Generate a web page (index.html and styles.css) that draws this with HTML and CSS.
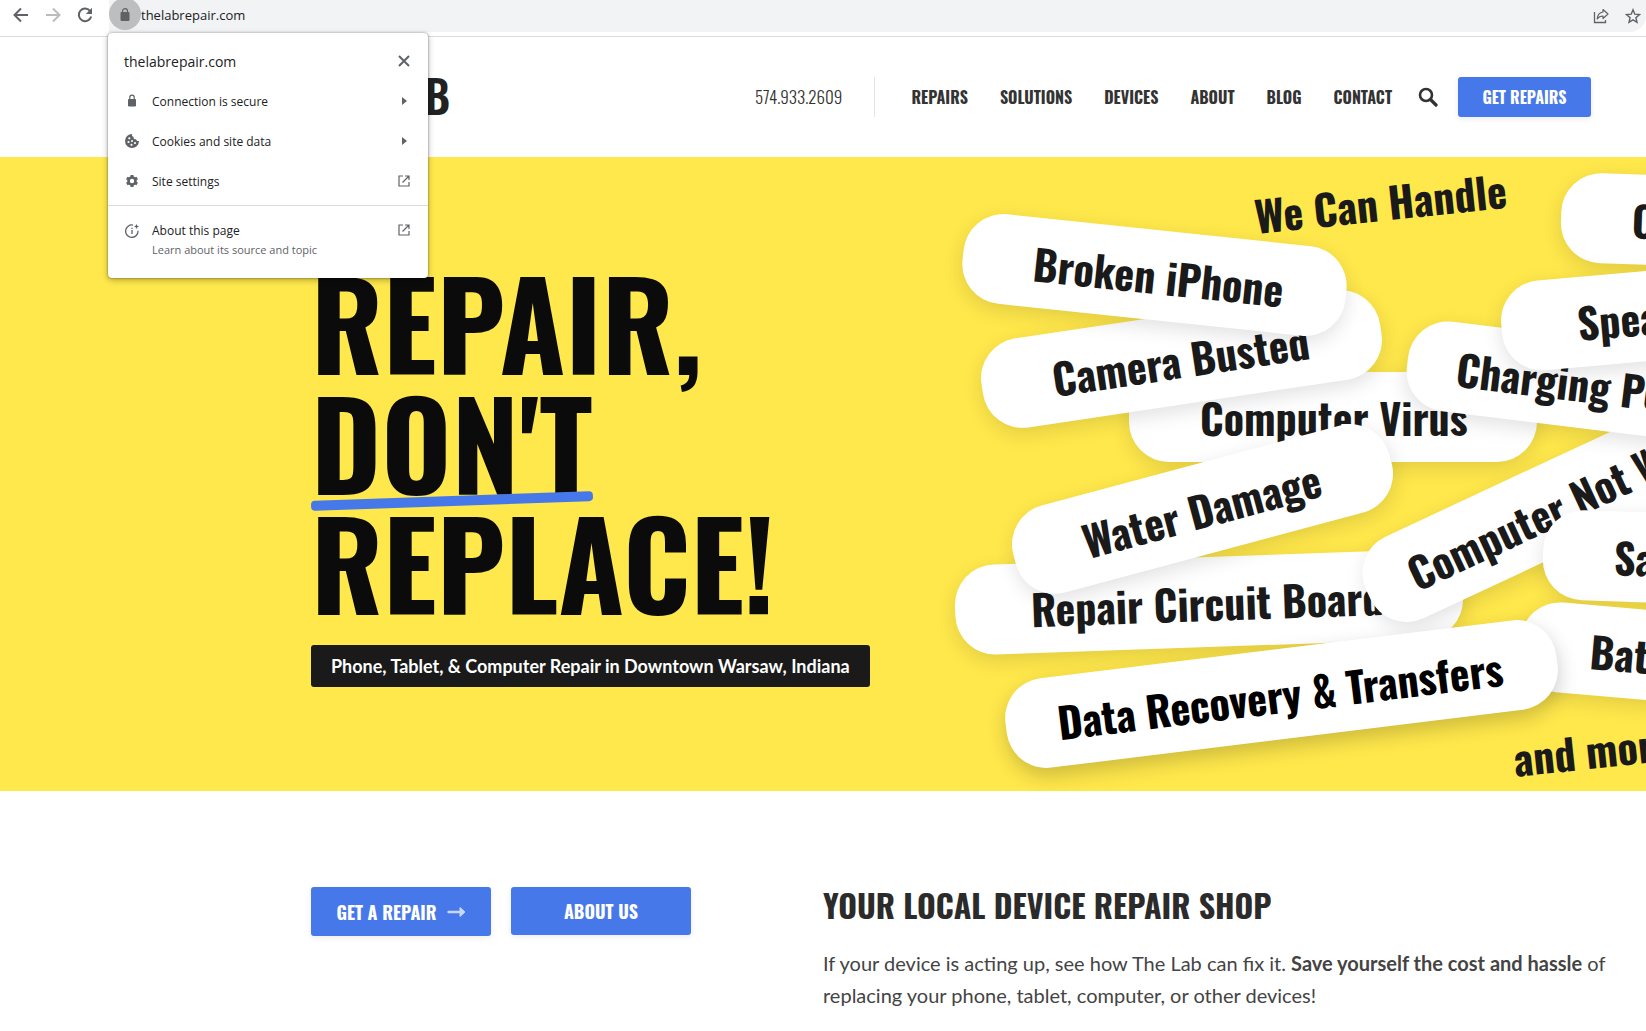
FILE: index.html
```html
<!DOCTYPE html>
<html lang="en">
<head>
    <meta charset="UTF-8">
    <meta name="viewport" content="width=device-width, initial-scale=1.0">
    <title>The Lab</title>
    <link rel="stylesheet" href="styles.css">
</head>
<body>
    <!-- browser bar -->
    <div class="browser-bar">
        <div class="browser-nav">
            <button class="icon-btn" aria-label="Back"><svg width="16" height="16" viewBox="0 0 16 16"><path d="M15 8H2M8 1.5L1.5 8L8 14.500" fill="none" stroke="#5f6368" stroke-width="2"/></svg></button>
            <button class="icon-btn" aria-label="Forward"><svg width="16" height="16" viewBox="0 0 16 16"><path d="M1 8h13M8 1.500L14.500 8L8 14.500" fill="none" stroke="#babcbe" stroke-width="2"/></svg></button>
            <button class="icon-btn" aria-label="Reload"><svg width="16" height="16" viewBox="0 0 16 16"><path d="M13.300 4.200A6.300 6.300 0 1 0 14.200 9.500" fill="none" stroke="#5f6368" stroke-width="2"/><path d="M15 .8v6.200H8.800z" fill="#5f6368"/></svg></button>
        </div>
        <div class="address">
            <button class="lock" aria-label="Site information"><svg width="10" height="13" viewBox="0 0 10 13"><path d="M1 4.500h8v8H1z" fill="#5f6368" stroke="#5f6368" stroke-linejoin="round"/><path d="M2.500 5V3.200a2.500 2.500 0 0 1 5 0V5" fill="none" stroke="#5f6368" stroke-width="1.200"/></svg></button>
            <span class="url">thelabrepair.com</span>
            <button class="icon-btn share" aria-label="Share"><svg width="16" height="16" viewBox="0 0 16 16"><path d="M1.500 4v10.500h11V12" fill="none" stroke="#5f6368" stroke-width="1.300"/><path d="M10 1.500L15 6l-5 4.500V8C7.500 8 5.500 9 4.200 11C4.500 7 6.500 4.500 10 4z" fill="none" stroke="#5f6368" stroke-width="1.200" stroke-linejoin="round"/></svg></button>
            <button class="icon-btn" aria-label="Bookmark"><svg width="16" height="16" viewBox="0 0 16 16"><path d="M8 1.800l1.800 4.400 4.700.4-3.600 3.100 1.100 4.600L8 11.800l-4 2.500 1.100-4.600L1.500 6.600l4.700-.4z" fill="none" stroke="#5f6368" stroke-width="1.400"/></svg></button>

            <!-- site info popup -->
            <div class="popup">
                <div class="popup-title">
                    <span>thelabrepair.com</span>
                    <button class="icon-btn" aria-label="Close"><svg width="12" height="12" viewBox="0 0 12 12"><path d="M1 1l10 10M11 1L1 11" stroke="#5f6368" stroke-width="2"/></svg></button>
                </div>
                <button class="row">
                    <svg width="14" height="14" viewBox="0 0 14 14"><path d="M3.500 5.500h7v6.500h-7z" fill="#5f6368" stroke="#5f6368" stroke-linejoin="round"/><path d="M4.800 5.500V3.400a2.200 2.200 0 0 1 4.400 0v2.100" fill="none" stroke="#5f6368" stroke-width="1.200"/></svg>
                    <span>Connection is secure</span>
                    <svg width="12" height="12" viewBox="0 0 12 12"><path d="M4 2l5 4-5 4z" fill="#5f6368"/></svg>
                </button>
                <button class="row">
                    <svg width="14" height="14" viewBox="0 0 14 14"><path d="M7 0a7 7 0 1 0 7 7c-1.500.3-2.700-.3-3-1.700C9.300 5.500 8.300 4.500 8.600 3 7.300 2.700 6.700 1.500 7 0z" fill="#5f6368"/><g fill="#fff"><circle cx="4.300" cy="4.300" r="1.100"/><circle cx="3.500" cy="8" r="1.100"/><circle cx="7" cy="7" r="1"/><circle cx="6.500" cy="10.800" r="1.100"/><circle cx="10" cy="9" r="1.100"/></g></svg>
                    <span>Cookies and site data</span>
                    <svg width="12" height="12" viewBox="0 0 12 12"><path d="M4 2l5 4-5 4z" fill="#5f6368"/></svg>
                </button>
                <button class="row">
                    <svg width="14" height="14" viewBox="0 0 14 14"><circle cx="7" cy="7" r="3.500" fill="none" stroke="#5f6368" stroke-width="2.600"/><path d="M7 1v2.500M7 10.500V13M1.800 4l2.200 1.300M10 8.700l2.200 1.300M1.800 10L4 8.700M10 5.300L12.200 4" stroke="#5f6368" stroke-width="3"/></svg>
                    <span>Site settings</span>
                    <svg width="12" height="12" viewBox="0 0 12 12"><path d="M5 1H1v10h10V7M7 1h4v4M11 1L4.500 7.500" fill="none" stroke="#5f6368" stroke-width="1.200"/></svg>
                </button>
                <hr>
                <button class="row about">
                    <svg width="14" height="14" viewBox="0 0 14 14"><path d="M8 1.100A6.200 6.200 0 1 0 13 6.800" fill="none" stroke="#5f6368" stroke-width="1.300"/><path d="M7 6v4M7 3.800v1.300" stroke="#5f6368" stroke-width="1.300"/><path d="M11.500 0l.8 1.700L14 2.500l-1.700.8-.8 1.700-.8-1.700L9 2.500l1.700-.8z" fill="#5f6368"/></svg>
                    <span>About this page<small>Learn about its source and topic</small></span>
                    <svg width="12" height="12" viewBox="0 0 12 12"><path d="M5 1H1v10h10V7M7 1h4v4M11 1L4.500 7.500" fill="none" stroke="#5f6368" stroke-width="1.200"/></svg>
                </button>
            </div>
        </div>
    </div>

    <header>
        <a href="#" class="logo">THE LAB</a>
        <a href="tel:5749332609" class="phone">574.933.2609</a>
        <nav>
            <a href="#">REPAIRS</a>
            <a href="#">SOLUTIONS</a>
            <a href="#">DEVICES</a>
            <a href="#">ABOUT</a>
            <a href="#">BLOG</a>
            <a href="#">CONTACT</a>
        </nav>
        <button class="icon-btn search" aria-label="Search"><svg width="20" height="20" viewBox="0 0 20 20"><circle cx="8" cy="8" r="6" fill="none" stroke="#333" stroke-width="2.600"/><path d="M12.500 12.500L18 18" stroke="#333" stroke-width="3.200" stroke-linecap="round"/></svg></button>
        <a href="#" class="btn btn-small">GET REPAIRS</a>
    </header>

    <section class="hero">
        <div class="hero-text">
            <h1>REPAIR,<br><span class="underlined">DON'T</span><br>REPLACE!</h1>
            <p class="tagline">Phone, Tablet, &amp; Computer Repair in Downtown Warsaw, Indiana</p>
        </div>
        <div class="pills">
            <span class="loose handle">We Can Handle</span>
            <span class="pill cracked">Cracked</span>
            <span class="pill circuit">Repair Circuit Board</span>
            <span class="pill virus">Computer Virus</span>
            <span class="pill camera">Camera Busted</span>
            <span class="pill broken">Broken iPhone</span>
            <span class="pill water">Water Damage</span>
            <span class="pill not-working">Computer Not Working</span>
            <span class="pill charging">Charging Port</span>
            <span class="pill speaker">Speaker</span>
            <span class="pill samsung">Samsung</span>
            <span class="pill battery">Battery Dead</span>
            <a href="#" class="pill data">Data Recovery &amp; Transfers</a>
            <span class="loose more">and more...</span>
        </div>
    </section>

    <section class="intro">
        <div class="buttons">
            <a href="#" class="btn arrow">GET A REPAIR <svg width="19" height="12" viewBox="0 0 19 12"><path d="M1.500 6H16" stroke="#c9d8fa" stroke-width="2.400" stroke-linecap="round"/><path d="M13 1.500L18 6l-5 4.500z" fill="#c9d8fa" stroke="#c9d8fa" stroke-linejoin="round"/></svg></a>
            <a href="#" class="btn">ABOUT US</a>
        </div>
        <div class="intro-text">
            <h2>YOUR LOCAL DEVICE REPAIR SHOP</h2>
            <p>If your device is acting up, see how The Lab can fix it. <strong>Save yourself the cost and hassle</strong> of replacing your phone, tablet, computer, or other devices!</p>
        </div>
    </section>
</body>
</html>
```
FILE: styles.css
```css
* {
    box-sizing: border-box;
}
body {
    margin: 0;
    background: #fff;
    color: #444;
    font-family: Lato, sans-serif;
    overflow-x: hidden;
}
a {
    text-decoration: none;
}
button {
    border: none;
    padding: 0;
    background: none;
    font-family: inherit;
    color: inherit;
    cursor: pointer;
}
.icon-btn {
    display: flex;
}

/* browser bar */
.browser-bar {
    display: flex;
    height: 37px;
    padding-bottom: 4px;
    border-bottom: 1px solid #d9dbdf;
    font-family: "Open Sans", "Noto Sans", sans-serif;
    color: #202124;
}
.browser-nav {
    display: flex;
    align-items: center;
    gap: 16px;
    padding: 0 16px 2px 13px;
}
.address {
    position: relative;
    flex: 1;
    display: flex;
    align-items: center;
    padding-right: 5px;
    background: #f1f3f4;
    border-radius: 0 0 16px 0;
}
.lock {
    display: flex;
    align-items: center;
    justify-content: center;
    width: 32px;
    height: 32px;
    margin-top: -4px;
    border-radius: 50%;
    background: #bdbebf;
}
.url {
    flex: 1;
    padding-bottom: 2px;
    font-size: 13px;
}
.share {
    margin-right: 16px;
}

/* site info popup */
.popup {
    position: absolute;
    top: 33px;
    left: -1px;
    z-index: 10;
    width: 320px;
    padding: 8px 0 16px;
    background: #fff;
    border-radius: 4px;
    box-shadow: 0 0 2px rgba(0, 0, 0, .5), 0 2px 6px rgba(0, 0, 0, .3);
}
.popup-title {
    display: flex;
    align-items: center;
    justify-content: space-between;
    height: 40px;
    padding: 0 18px 0 16px;
    font-size: 14px;
}
.row {
    display: flex;
    align-items: center;
    width: 100%;
    height: 40px;
    padding: 0 18px 0 17px;
    font-size: 12px;
    text-align: left;
}
.row span {
    flex: 1;
    margin-left: 13px;
}
.row small {
    display: block;
    font-size: 11px;
    line-height: 20px;
    color: #5f6368;
}
.popup hr {
    margin: 4px 0;
    border: none;
    border-top: 1px solid #d9dbdf;
}
.about {
    align-items: flex-start;
    height: 52px;
    padding-top: 12px;
    line-height: 18px;
}
.about svg {
    margin-top: 2px;
}

/* site header */
header,
h1,
h2,
.btn,
.pills {
    font-family: Oswald, "Liberation Sans Narrow", "Roboto Condensed", sans-serif;
}
header {
    display: flex;
    align-items: center;
    height: 120px;
    padding: 0 55px 0 303px;
}
header a {
    color: #333;
}
.logo {
    margin-right: auto;
    font-size: 45px;
    font-weight: 600;
    line-height: 64px;
    padding-bottom: 4px;
}
header .logo {
    color: #222;
}
.phone {
    padding-right: 32px;
    border-right: 1px solid #e4e4e4;
    font-size: 17px;
    font-weight: 300;
    line-height: 40px;
}
nav {
    display: flex;
    gap: 32px;
    padding: 0 26px 0 36px;
    font-size: 16px;
    font-weight: bold;
}
.search {
    margin-right: 20px;
}
.btn {
    display: flex;
    align-items: center;
    justify-content: center;
    gap: 10px;
    width: 180px;
    height: 48px;
    border-radius: 3px;
    background: #4678e9;
    color: #fff;
    font-size: 18px;
    font-weight: bold;
    box-shadow: 0 2px 6px rgba(0, 0, 0, .08);
}
header .btn-small {
    width: 133px;
    height: 40px;
    color: #fff;
    font-size: 16px;
}

/* hero */
.hero {
    display: grid;
    grid-template-columns: 589px 1fr;
    height: 634px;
    padding-left: 311px;
    background: #ffe84b;
    overflow: hidden;
}
.hero-text {
    padding-top: 104px;
}
h1 {
    margin: 0;
    color: #0b0b0b;
    font-size: 120px;
    line-height: 120px;
}
.underlined {
    position: relative;
}
.underlined::after {
    content: "";
    position: absolute;
    left: 0;
    right: 0;
    bottom: 24px;
    height: 10px;
    border-radius: 4px;
    background: #4678e9;
    transform: rotate(-2deg);
}
.tagline {
    display: inline-block;
    margin: 24px 0 0;
    padding: 0 20px;
    border-radius: 3px;
    background: #1a1a1a;
    color: #fff;
    font-size: 18px;
    font-weight: bold;
    line-height: 42px;
}

/* scattered labels */
.pills {
    position: relative;
    color: #1a1a1a;
    font-size: 42px;
    font-weight: bold;
    white-space: nowrap;
}
.pill,
.loose {
    position: absolute;
    line-height: 90px;
}
.pill {
    padding-left: 71px;
    border-radius: 40px;
    background: #fff;
    box-shadow: 0 6px 20px rgba(0, 0, 0, .12);
}
.handle {
    left: 354px;
    top: 0;
    transform: rotate(-6deg);
}
.cracked {
    left: 661px;
    top: 20px;
    width: 300px;
    transform: rotate(2deg);
}
.circuit {
    left: 55px;
    top: 400px;
    width: 508px;
    padding-left: 76px;
    transform: rotate(-2deg);
}
.virus {
    left: 229px;
    top: 215px;
    width: 408px;
}
.camera {
    left: 80px;
    top: 157px;
    width: 403px;
    transform: rotate(-8.5deg);
}
.broken {
    left: 62px;
    top: 73px;
    width: 385px;
    transform: rotate(6deg);
}
.water {
    left: 108px;
    top: 307px;
    width: 389px;
    transform: rotate(-15deg);
}
.not-working {
    left: 442px;
    top: 274px;
    width: 560px;
    padding-left: 46px;
    transform: rotate(-25deg);
}
.charging {
    left: 506px;
    top: 185px;
    width: 416px;
    padding-left: 50px;
    transform: rotate(7deg);
}
.speaker {
    left: 601px;
    top: 112px;
    width: 340px;
    padding-left: 76px;
    transform: rotate(-5deg);
}
.samsung {
    left: 643px;
    top: 357px;
    width: 300px;
    transform: rotate(2deg);
}
.battery {
    left: 619px;
    top: 458px;
    width: 370px;
    transform: rotate(5deg);
}
.data {
    left: 104px;
    top: 492px;
    width: 555px;
    padding-left: 52px;
    color: #000;
    box-shadow: 0 8px 20px rgba(0, 0, 0, .2);
    transform: rotate(-7deg);
}
.more {
    left: 613px;
    top: 546px;
    transform: rotate(-6deg);
}

/* intro */
.intro {
    display: flex;
    padding: 96px 30px 24px 311px;
}
.buttons {
    display: flex;
    gap: 20px;
    width: 512px;
}
.arrow {
    height: 49px;
}
.intro-text {
    flex: 1;
}
h2 {
    margin: 0;
    color: #2b2b2b;
    font-size: 32px;
    line-height: 36px;
}
.intro p {
    margin: 24px 0 0;
    font-size: 20px;
    line-height: 32px;
}
```
